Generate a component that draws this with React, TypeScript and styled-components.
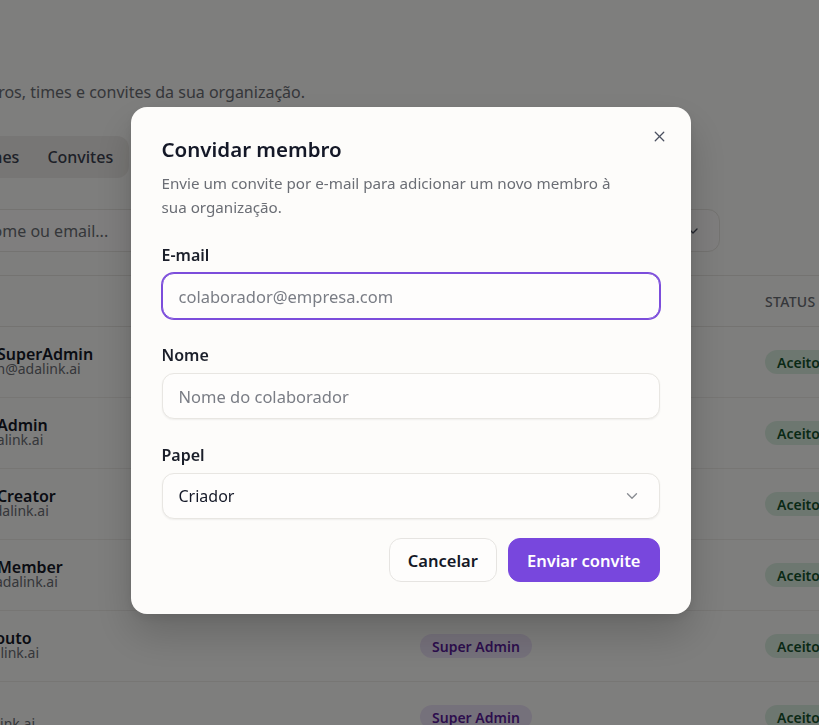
import React from 'react'
import styled, { createGlobalStyle } from 'styled-components'
import { X, ChevronDown, Search } from 'lucide-react'

const GlobalStyle = createGlobalStyle`
  * {
    box-sizing: border-box;
  }
  body {
    margin: 0;
    background: #fdfcfa;
    font-family: 'Noto Sans', 'Segoe UI', sans-serif;
    color: #141827;
    overflow: hidden;
  }
`

type Member = {
  name: string
  email: string
}

const members: Member[] = [
  { name: 'Usuário SuperAdmin', email: 'superadmin@adalink.ai' },
  { name: 'Usuário Admin', email: 'admin@adalink.ai' },
  { name: 'Usuário Creator', email: 'creator@adalink.ai' },
  { name: 'Usuário Member', email: 'member@adalink.ai' },
  { name: 'Rafael Couto', email: 'rafael@adalink.ai' },
  { name: 'Lucas', email: 'lucas@adalink.ai' },
]

const App: React.FC = () => {
  return (
    <>
      <GlobalStyle />
      <Page>
        <PageTitle>Equipe</PageTitle>
        <PageSubtitle>Gerencie os membros, times e convites da sua organização.</PageSubtitle>

        <Tabs>
          <Tab>Membros</Tab>
          <Tab>Times</Tab>
          <Tab>Convites</Tab>
        </Tabs>

        <Filters>
          <SearchBox>
            <Search size={16} color="#8a8d93" />
            Buscar por nome ou email...
          </SearchBox>
          <FilterSelect>
            Todos os papéis
            <ChevronDown size={16} color="#4b5060" />
          </FilterSelect>
        </Filters>

        <Table>
          <HeadRow>
            <HeadCell>Membro</HeadCell>
            <HeadCell>Papel</HeadCell>
            <HeadCell>Status</HeadCell>
          </HeadRow>
          {members.map(m => (
            <Row key={m.email}>
              <NameCell>
                <Name>{m.name}</Name>
                <Email>{m.email}</Email>
              </NameCell>
              <Cell>
                <Badge tone="purple">Super Admin</Badge>
              </Cell>
              <Cell>
                <Badge tone="green">Aceito</Badge>
              </Cell>
            </Row>
          ))}
        </Table>
      </Page>

      <Overlay>
        <Dialog>
          <CloseButton aria-label="Fechar">
            <X size={17} strokeWidth={1.8} />
          </CloseButton>
          <DialogHeader>
            <DialogTitle>Convidar membro</DialogTitle>
            <DialogText>Envie um convite por e-mail para adicionar um novo membro à sua organização.</DialogText>
          </DialogHeader>

          <Field>
            <Label>E-mail</Label>
            <Input focused placeholder="colaborador@empresa.com" />
          </Field>
          <Field>
            <Label>Nome</Label>
            <Input placeholder="Nome do colaborador" />
          </Field>
          <Field>
            <Label>Papel</Label>
            <Select>
              Criador
              <ChevronDown size={18} color="#8a8d93" strokeWidth={1.8} />
            </Select>
          </Field>

          <Actions>
            <Button>Cancelar</Button>
            <Button primary>Enviar convite</Button>
          </Actions>
        </Dialog>
      </Overlay>
    </>
  )
}

export default App

const Page = styled('main')`
  width: 863px;
  margin-left: -143px;
  padding-top: 40px;
`

const PageTitle = styled('h1')`
  margin: 0;
  font-size: 26px;
  line-height: 34px;
  font-weight: 700;
`

const PageSubtitle = styled('p')`
  margin: 6px 0 0;
  font-size: 16px;
  line-height: 24px;
  color: #6b6e75;
`

const Tabs = styled('div')`
  display: inline-flex;
  gap: 4px;
  margin-top: 32px;
  padding: 4px;
  height: 42px;
  border-radius: 12px;
  background: #efedea;
`

const Tab = styled('div')`
  display: flex;
  align-items: center;
  padding: 0 12px;
  font-size: 16px;
  font-weight: 500;
  color: #3b4150;
`

const Filters = styled('div')`
  display: flex;
  gap: 12px;
  margin-top: 31px;
`

const SearchBox = styled('div')`
  flex: 1;
  display: flex;
  align-items: center;
  gap: 9px;
  height: 43px;
  padding: 0 14px;
  border: 1px solid #e8e6e2;
  border-radius: 12px;
  background: #fefdfc;
  font-size: 16px;
  color: #6b6e75;
`

const FilterSelect = styled('div')`
  width: 200px;
  display: flex;
  align-items: center;
  justify-content: space-between;
  height: 43px;
  padding: 0 18px 0 14px;
  border: 1px solid #e8e6e2;
  border-radius: 12px;
  background: #fefdfc;
  font-size: 16px;
  color: #141827;
`

const Table = styled('div')`
  width: 1090px;
  margin-top: 23px;
  border-top: 1px solid #e8e6e2;
`

const HeadRow = styled('div')`
  display: grid;
  grid-template-columns: 563px 345px 1fr;
  height: 51px;
  align-items: center;
  border-bottom: 1px solid #e8e6e2;
`

const HeadCell = styled('div')`
  font-size: 14px;
  font-weight: 500;
  letter-spacing: 0.3px;
  text-transform: uppercase;
  color: #6b6e75;

  &:first-child {
    padding-left: 72px;
  }
`

const Row = styled('div')`
  display: grid;
  grid-template-columns: 563px 345px 1fr;
  height: 71px;
  align-items: center;
  border-bottom: 1px solid #eeece9;
`

const Cell = styled('div')`
  display: flex;
  align-items: center;
`

const NameCell = styled('div')`
  display: flex;
  flex-direction: column;
  padding-left: 75px;
  padding-bottom: 3px;
`

const Name = styled('span')`
  font-size: 16px;
  line-height: 16px;
  font-weight: 600;
  color: #141827;
`

const Email = styled('span')`
  font-size: 14px;
  line-height: 14px;
  margin-left: -6px;
  color: #6b6e75;
`

const Badge = styled('span')<{ tone: 'purple' | 'green' }>`
  display: inline-flex;
  align-items: center;
  height: 24px;
  padding: 0 12px;
  border-radius: 12px;
  font-size: 14px;
  font-weight: 600;
  background: ${props => (props.tone === 'purple' ? '#ebe2f7' : '#dbefe1')};
  color: ${props => (props.tone === 'purple' ? '#5b1d9c' : '#14532d')};
`

const Overlay = styled('div')`
  position: fixed;
  inset: 0;
  display: flex;
  align-items: flex-start;
  justify-content: center;
  padding: 107px 0 0 2px;
  background: rgba(0, 0, 0, 0.5);
`

const Dialog = styled('div')`
  position: relative;
  width: 560px;
  padding: 28px 31px 32px;
  border-radius: 16px;
  background: #fdfcfa;
  box-shadow: 0 20px 40px rgba(0, 0, 0, 0.18), 0 4px 12px rgba(0, 0, 0, 0.08);
`

const CloseButton = styled('button')`
  position: absolute;
  top: 21px;
  right: 23px;
  display: flex;
  padding: 0;
  border: 0;
  background: none;
  color: #4b5060;
`

const DialogHeader = styled('div')`
  padding-right: 40px;
`

const DialogTitle = styled('h2')`
  margin: 0;
  font-size: 20.5px;
  line-height: 28px;
  font-weight: 600;
  color: #141827;
`

const DialogText = styled('p')`
  margin: 8px 0 0;
  font-size: 15.2px;
  line-height: 24px;
  color: #6b6e75;
`

const Field = styled('div')`
  display: flex;
  flex-direction: column;
  gap: 6px;
  margin-top: 24px;
`

const Label = styled('label')`
  font-size: 16px;
  line-height: 24px;
  font-weight: 600;
  color: #1b1f2a;
`

const Input = styled('input')<{ focused?: boolean }>`
  height: 46px;
  padding: 0 16px;
  border: 1px solid ${props => (props.focused ? '#7c4ddb' : '#e8e6e2')};
  border-radius: 12px;
  background: #fefdfc;
  box-shadow: ${props =>
    props.focused ? '0 0 0 1px #7c4ddb' : '0 1px 2px rgba(0, 0, 0, 0.06)'};
  font-family: inherit;
  font-size: 16.5px;
  color: #141827;
  outline: none;

  &::placeholder {
    color: #7a7d85;
  }
`

const Select = styled('div')`
  display: flex;
  align-items: center;
  justify-content: space-between;
  height: 46px;
  padding: 0 18px 0 16px;
  border: 1px solid #e8e6e2;
  border-radius: 12px;
  background: #fefdfc;
  box-shadow: 0 1px 2px rgba(0, 0, 0, 0.06);
  font-size: 16px;
  color: #141827;
`

const Actions = styled('div')`
  display: flex;
  justify-content: flex-end;
  gap: 11px;
  margin-top: 19px;
`

const Button = styled('button')<{ primary?: boolean }>`
  height: 44px;
  padding: 0 18px;
  border: 1px solid ${props => (props.primary ? '#7847dd' : '#e6e4e1')};
  border-radius: 12px;
  background: ${props => (props.primary ? '#7847dd' : '#fefdfc')};
  color: ${props => (props.primary ? '#ffffff' : '#141827')};
  font-family: inherit;
  font-size: 16.5px;
  font-weight: 600;
`
